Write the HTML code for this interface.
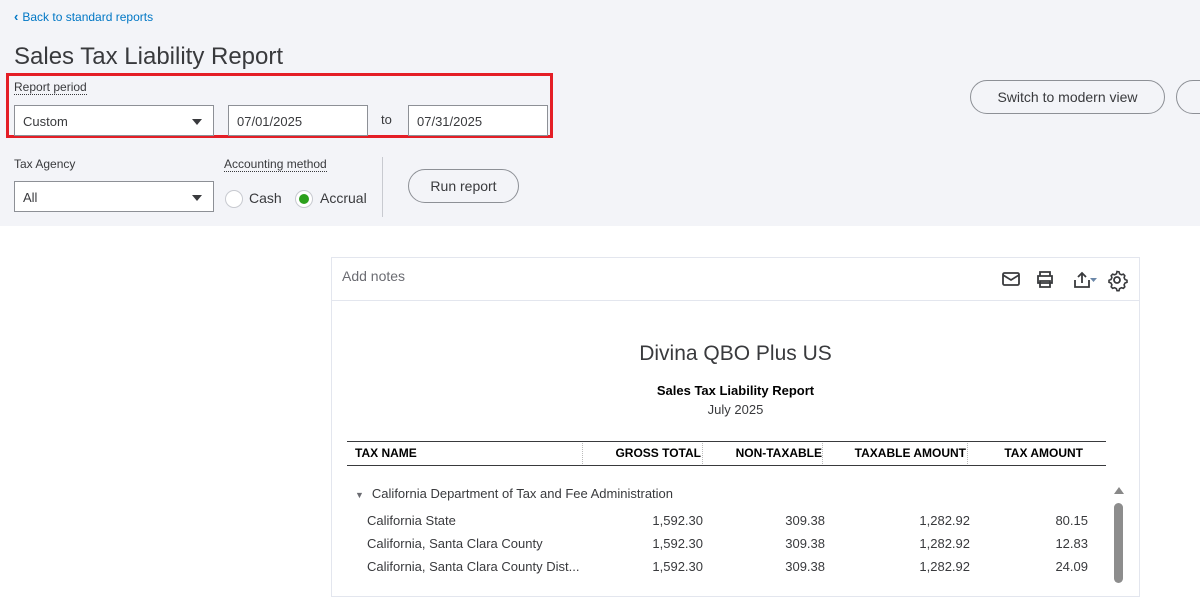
<!DOCTYPE html>
<html><head><style>
*{box-sizing:border-box;margin:0;padding:0}
body{width:1200px;height:577px;overflow:hidden;background:#fff;font-family:"Liberation Sans",sans-serif;color:#393a3d;position:relative}
.top{position:absolute;left:0;top:0;width:1200px;height:226px;background:#f3f4f8}
.abs{position:absolute}
.back{left:14px;top:9px;font-size:12px;color:#0077c5}
h1{position:absolute;left:14px;top:43px;font-size:24px;font-weight:normal;color:#393a3d}
.lbl{font-size:12px;color:#393a3d;border-bottom:1px dotted #393a3d;line-height:14px}
.box{background:#fff;border:1px solid #8d9096;height:31px;font-size:13px;padding:0 8px;line-height:31px;color:#393a3d}
.caret{position:absolute;right:11px;top:13px;width:0;height:0;border-left:5px solid transparent;border-right:5px solid transparent;border-top:6px solid #393a3d}
.btn{border:1px solid #8d9096;border-radius:17px;height:34px;font-size:14px;line-height:32px;text-align:center;color:#393a3d;background:#f3f4f8}
.radio{width:18px;height:18px;border-radius:50%;border:1px solid #c8cad0;background:#fff}
.card{left:331px;top:257px;width:809px;height:340px;border:1px solid #e3e6ee}
.num{position:absolute;font-size:13px;text-align:right;line-height:23px}
.th{position:absolute;top:446px;font-size:12px;font-weight:bold;color:#000}
</style></head><body>
<div class="top"></div>
<div class="abs back"><span style="font-size:13px;margin-right:4px;font-weight:bold">&#8249;</span>Back to standard reports</div>
<h1>Sales Tax Liability Report</h1>
<div class="abs" style="left:6px;top:73px;width:547px;height:65px;border:3px solid #e41e26"></div>
<div class="abs lbl" style="left:14px;top:80px">Report period</div>
<div class="abs box" style="left:14px;top:105px;width:200px">Custom<span class="caret"></span></div>
<div class="abs box" style="left:228px;top:105px;width:140px">07/01/2025</div>
<div class="abs" style="left:381px;top:112px;font-size:13px">to</div>
<div class="abs box" style="left:408px;top:105px;width:140px">07/31/2025</div>
<div class="abs btn" style="left:970px;top:80px;width:195px">Switch to modern view</div>
<div class="abs btn" style="left:1176px;top:80px;width:60px"></div>
<div class="abs" style="left:14px;top:157px;font-size:12px">Tax Agency</div>
<div class="abs lbl" style="left:224px;top:157px">Accounting method</div>
<div class="abs box" style="left:14px;top:181px;width:200px">All<span class="caret"></span></div>
<div class="abs radio" style="left:225px;top:190px"></div>
<div class="abs" style="left:249px;top:190px;font-size:14px">Cash</div>
<div class="abs radio" style="left:295px;top:190px"><div style="width:10px;height:10px;border-radius:50%;background:#2ca01c;margin:3px"></div></div>
<div class="abs" style="left:320px;top:190px;font-size:14px">Accrual</div>
<div class="abs" style="left:382px;top:157px;width:1px;height:60px;background:#c8cad0"></div>
<div class="abs btn" style="left:408px;top:169px;width:111px;font-size:14px">Run report</div>

<div class="abs card"></div>
<div class="abs" style="left:332px;top:300px;width:807px;height:1px;background:#e3e6ee"></div>
<div class="abs" style="left:342px;top:268px;font-size:14px;color:#6b6c72">Add notes</div>
<svg class="abs" style="left:1000px;top:268px" width="130" height="24" viewBox="0 0 130 24" fill="none" stroke="#393a3d" stroke-width="1.8">
<rect x="3" y="5" width="16" height="12" rx="1.5"/><path d="M3 7l8 5 8-5"/>
<path d="M40 8V4h10v4M38 8h14v7h-14zM40 13h10v6h-10z"/>
<path d="M75 12v7h14v-7M82 15V5M78 9l4-4 4 4"/>
<path d="M90 10h7l-3.5 4z" fill="#6b87a8" stroke="none"/>
<circle cx="117" cy="12" r="3"/><path d="M117 3.5l2 .3.6 2 1.8 1 2-.6 1.4 1.5-.7 2 .9 1.8 2 .8v2l-2 .7-.9 1.8.7 2-1.4 1.5-2-.6-1.8 1-.6 2h-2l-.6-2-1.8-1-2 .6-1.4-1.5.7-2-.9-1.8-2-.7v-2l2-.8.9-1.8-.7-2 1.4-1.5 2 .6 1.8-1 .6-2z" stroke-width="1.6"/>
</svg>
<div class="abs" style="left:331px;width:809px;top:342px;text-align:center;font-size:21px;color:#393a3d">Divina QBO Plus US</div>
<div class="abs" style="left:331px;width:809px;top:383px;text-align:center;font-size:13px;font-weight:bold;color:#000">Sales Tax Liability Report</div>
<div class="abs" style="left:331px;width:809px;top:402px;text-align:center;font-size:13px">July 2025</div>
<div class="abs" style="left:347px;top:441px;width:759px;height:1px;background:#393a3d"></div>
<div class="abs" style="left:347px;top:465px;width:759px;height:1px;background:#393a3d"></div>
<div class="abs" style="left:582px;top:443px;height:21px;border-left:1px dotted #bbb"></div>
<div class="abs" style="left:702px;top:443px;height:21px;border-left:1px dotted #bbb"></div>
<div class="abs" style="left:822px;top:443px;height:21px;border-left:1px dotted #bbb"></div>
<div class="abs" style="left:967px;top:443px;height:21px;border-left:1px dotted #bbb"></div>
<div class="th" style="left:355px">TAX NAME</div>
<div class="th" style="left:582px;width:119px;text-align:right">GROSS TOTAL</div>
<div class="th" style="left:702px;width:120px;text-align:right">NON-TAXABLE</div>
<div class="th" style="left:822px;width:144px;text-align:right">TAXABLE AMOUNT</div>
<div class="th" style="left:967px;width:116px;text-align:right">TAX AMOUNT</div>
<div class="abs" style="left:355px;top:486px;font-size:13px"><span style="font-size:9px;color:#6b6c72;margin-right:8px">&#9660;</span>California Department of Tax and Fee Administration</div>
<div class="abs" style="left:1114px;top:487px;width:0;height:0;border-left:5px solid transparent;border-right:5px solid transparent;border-bottom:7px solid #888"></div>
<div class="abs" style="left:1114px;top:503px;width:9px;height:80px;border-radius:5px;background:#8d8d8d"></div>
<div class="num" style="left:367px;top:509px;text-align:left">California State<br>California, Santa Clara County<br>California, Santa Clara County Dist...</div>
<div class="num" style="left:583px;width:120px;top:509px">1,592.30<br>1,592.30<br>1,592.30</div>
<div class="num" style="left:705px;width:120px;top:509px">309.38<br>309.38<br>309.38</div>
<div class="num" style="left:850px;width:120px;top:509px">1,282.92<br>1,282.92<br>1,282.92</div>
<div class="num" style="left:968px;width:120px;top:509px">80.15<br>12.83<br>24.09</div>
</body></html>
